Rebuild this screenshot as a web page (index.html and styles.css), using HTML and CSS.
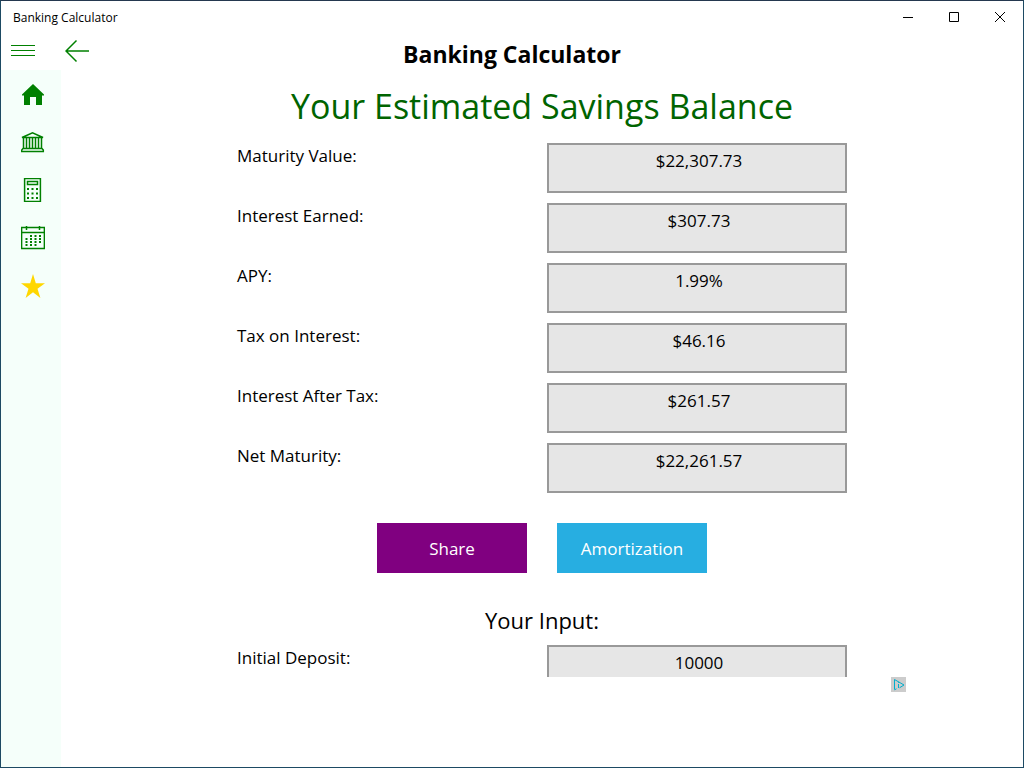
FILE: index.html
```html
<!DOCTYPE html>
<html lang="en">
  <head>
    <meta charset="UTF-8" />
    <title>Banking Calculator</title>
    <link rel="stylesheet" href="styles.css">
  </head>
  <body>
    <div class="window">
      <div class="titlebar">
        <span class="titlebar-text">Banking Calculator</span>
        <div class="window-buttons">
          <button type="button" aria-label="Minimize">
            <svg width="10" height="10" viewBox="0 0 10 10"><path d="M0 5.5h10" /></svg>
          </button>
          <button type="button" aria-label="Maximize">
            <svg width="10" height="10" viewBox="0 0 10 10"><path d="M.5 .5h9v9h-9z" /></svg>
          </button>
          <button type="button" aria-label="Close">
            <svg width="10" height="10" viewBox="0 0 10 10"><path d="M0 0l10 10M10 0L0 10" /></svg>
          </button>
        </div>
      </div>

      <header class="header">
        <div class="header-nav">
          <button type="button" aria-label="Menu">
            <svg width="24" height="24" viewBox="0 0 24 24"><path d="M0 6.5h24M0 11.5h24M0 16.5h24" /></svg>
          </button>
          <button type="button" aria-label="Back">
            <svg width="24" height="24" viewBox="0 0 24 24"><path class="arrow" d="M24 12H1M11.500 1.500L1 12l10.500 10.500" /></svg>
          </button>
        </div>
        <h1>Banking Calculator</h1>
      </header>

      <div class="body">
        <nav class="sidebar">
          <a href="#home" aria-label="Home">
            <svg width="24" height="24" viewBox="0 0 24 24"><path class="solid" d="M12 2L23 12.500V13.500H21V23H15V15H9V23H3V13.500H1V12.500z" /></svg>
          </a>
          <a href="#bank" aria-label="Bank">
            <svg width="24" height="24" viewBox="0 0 24 24">
              <path d="M1 7.500L11.500 2.700L22 7.500zM2.500 8v10.500M5.500 8v10M8.500 8v10M11.500 8v10M14.500 8v10M17.500 8v10M20.500 8v10.500M2 18.500h19M.7 21.500h21.600v-1.500l-1.300-1.500H2L.7 20z" />
            </svg>
          </a>
          <a href="#calculator" aria-label="Calculator">
            <svg width="24" height="24" viewBox="0 0 24 24">
              <path d="M3.600 .6h15.800v22.800H3.600zM6.500 3.500h10v3h-10z" />
              <path class="dots" d="M6 11h2m2.500 0h2m2.500 0h2M6 15.500h2m2.500 0h2m2.500 0h2M6 20h2m2.500 0h2m2.500 0h2" />
            </svg>
          </a>
          <a href="#calendar" aria-label="Calendar">
            <svg width="24" height="24" viewBox="0 0 24 24">
              <path d="M.6 1.600h22.800v20.800H.6zM.6 6.500h22.800M5.500 0v4M18.500 0v4" />
              <path class="dots" d="M9 10h2m2.500 0h2m2.500 0h2M4.500 13h2m2.500 0h2m2.500 0h2m2.500 0h2M4.500 16h2m2.500 0h2m2.500 0h2m2.500 0h2M4.500 19h2m2.500 0h2m2.500 0h2" />
            </svg>
          </a>
          <a href="#rate" aria-label="Rate">
            <svg width="24" height="24" viewBox="0 0 24 24"><path class="star" d="M12 0l2.800 9.200H24l-7.500 5.600L19.400 24 12 18.300 4.600 24l2.900-9.200L0 9.200h9.200z" /></svg>
          </a>
        </nav>

        <main class="content">
          <div class="scroll-area">
            <h2 class="page-title">Your Estimated Savings Balance</h2>

            <div class="fields">
              <label for="maturity">Maturity Value:</label>
              <input id="maturity" type="text" value="$22,307.73" readonly />
              <label for="interest">Interest Earned:</label>
              <input id="interest" type="text" value="$307.73" readonly />
              <label for="apy">APY:</label>
              <input id="apy" type="text" value="1.99%" readonly />
              <label for="tax">Tax on Interest:</label>
              <input id="tax" type="text" value="$46.16" readonly />
              <label for="after-tax">Interest After Tax:</label>
              <input id="after-tax" type="text" value="$261.57" readonly />
              <label for="net">Net Maturity:</label>
              <input id="net" type="text" value="$22,261.57" readonly />
            </div>

            <div class="actions">
              <button type="button" class="share">Share</button>
              <button type="button" class="amortization">Amortization</button>
            </div>

            <h3 class="input-title">Your Input:</h3>
            <div class="fields">
              <label for="deposit">Initial Deposit:</label>
              <input id="deposit" type="text" value="10000" readonly />
            </div>
          </div>

          <div class="ad">
            <a href="#adchoices" class="ad-choices" aria-label="AdChoices">
              <svg width="15" height="15" viewBox="0 0 15 15">
                <path d="M3.500 12.500v-10l9.500 5.500-4.500 2.800M3.500 12.800l2-1" />
                <path d="M7.500 7v4M7.500 4.800v1" />
              </svg>
            </a>
          </div>
        </main>
      </div>
    </div>
  </body>
</html>
```
FILE: styles.css
```css
* {
  box-sizing: border-box;
}
body {
  margin: 0;
  font-family: "Open Sans", "Noto Sans", sans-serif;
  color: #000;
  background-color: #fff;
}
h1,
h2,
h3 {
  margin: 0;
  font-weight: 400;
}
button {
  font-family: inherit;
  padding: 0;
  border: 0;
  background: none;
}
svg {
  display: block;
  fill: none;
  stroke: green;
}

.window {
  display: flex;
  flex-direction: column;
  height: 100vh;
  border: 1px solid #1d4a63;
  border-top-color: #24384f;
}

/* title bar */
.titlebar {
  display: flex;
  justify-content: space-between;
  align-items: center;
  height: 32px;
  padding-left: 12px;
  font-size: 12px;
}
.window-buttons {
  display: flex;
}
.window-buttons button {
  display: flex;
  justify-content: center;
  align-items: center;
  width: 46px;
  height: 32px;
}
.window-buttons svg {
  stroke: #000;
}

/* header */
.header {
  display: grid;
  grid-template-columns: 1fr auto 1fr;
  height: 37px;
  padding-bottom: 2px;
}
.header-nav {
  display: flex;
  align-items: center;
  gap: 30px;
  padding-left: 10px;
}
.header h1 {
  align-self: end;
  font-size: 23px;
  line-height: 28px;
  font-weight: 700;
}
.arrow {
  stroke-width: 1.500;
}

.body {
  display: flex;
  flex: 1;
  min-height: 0;
}

/* sidebar */
.sidebar {
  width: 60px;
  background-color: #f5fffa;
}
.sidebar a {
  display: flex;
  align-items: center;
  height: 48px;
  padding-left: 20px;
}
.sidebar svg {
  stroke-width: 1.500;
}
.sidebar .solid {
  fill: green;
  stroke: none;
}
.sidebar .dots {
  stroke-width: 2;
}
.sidebar .star {
  fill: gold;
  stroke: none;
}

/* content */
.content {
  display: flex;
  flex-direction: column;
  flex: 1;
  min-width: 0;
}
.scroll-area {
  display: flex;
  flex-direction: column;
  align-items: center;
  flex: 1;
  min-height: 0;
  overflow-y: auto;
  scrollbar-width: none;
}
.scroll-area > * {
  flex-shrink: 0;
}
.page-title {
  padding: 12px 0 13px;
  font-size: 34px;
  line-height: 48px;
  color: #006400;
}
.fields {
  display: grid;
  grid-template-columns: 300px 300px;
  gap: 10px;
  font-size: 17px;
}
.fields label {
  line-height: 26px;
}
.fields input {
  width: 100%;
  height: 50px;
  padding: 0 2px 16px 6px;
  font-family: inherit;
  font-size: 17px;
  text-align: center;
  color: #000;
  background-color: #e6e6e6;
  border: 2px solid #999;
  border-radius: 0;
  outline: 0;
}
.actions {
  display: flex;
  gap: 30px;
  padding: 30px 0;
}
.actions button {
  width: 150px;
  height: 50px;
  font-size: 17px;
  color: #fff;
}
.share {
  background-color: purple;
}
.amortization {
  background-color: #27aee1;
}
.input-title {
  padding-bottom: 8px;
  font-size: 22px;
  line-height: 34px;
}

/* ad banner */
.ad {
  display: flex;
  justify-content: flex-end;
  height: 90px;
  padding-right: 117px;
}
.ad-choices {
  width: 15px;
  height: 15px;
  background-color: #ccc;
}
.ad-choices svg {
  stroke: #00aecd;
}
```
